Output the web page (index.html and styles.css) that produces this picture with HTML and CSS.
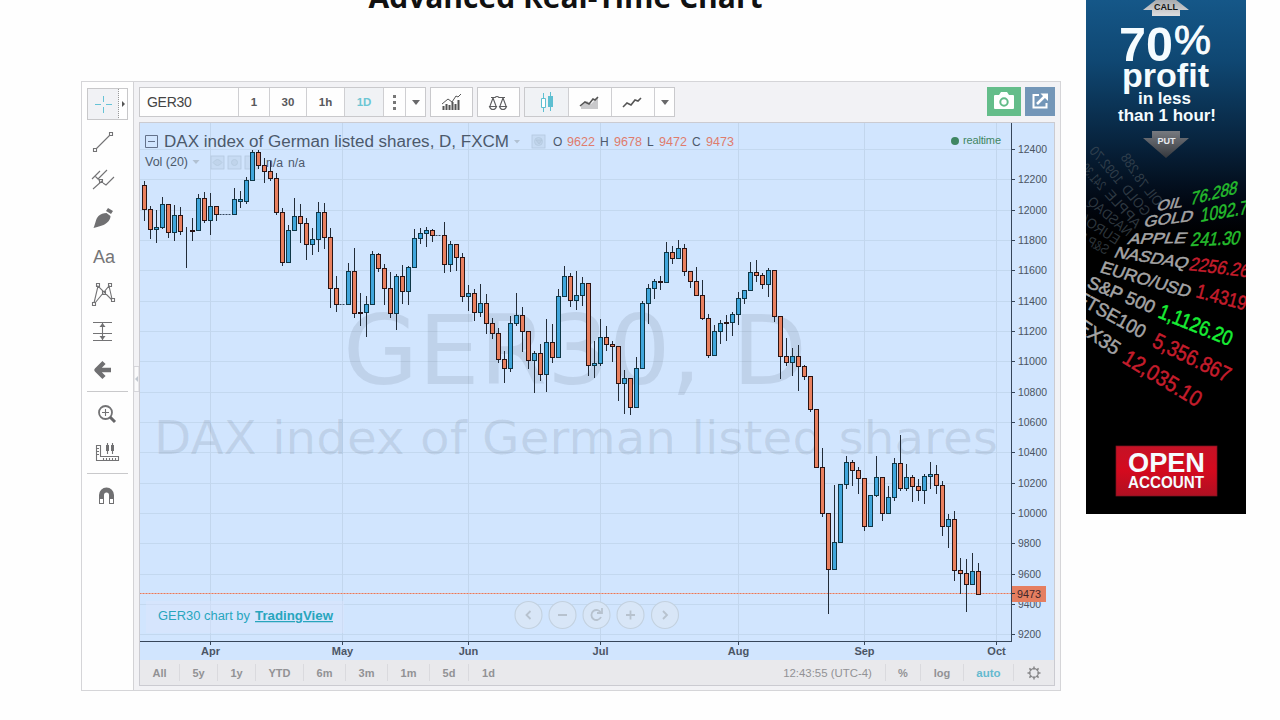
FILE: index.html
```html
<!DOCTYPE html>
<html lang="en">
<head>
<meta charset="utf-8">
<title>Advanced Real-Time Chart</title>
<link rel="stylesheet" href="styles.css">
</head>
<body>
<div class="page">
  <main class="main">
    <h1 class="title">Advanced Real-Time Chart</h1>
    <section class="widget">
      <nav class="tools">
        <svg class="tool" viewBox="0 0 46 38"><rect x="3.5" y="3.500" width="40" height="31" fill="#f1f2f5" stroke="#c8c8ca"/><path d="M35 4h8v30h-8z" fill="#fff"/><path d="M34.500 4v30" stroke="#999" stroke-dasharray="1 1"/><path d="M38 16l3 3-3 3z" fill="#555"/><path d="M11 19.500h6M22 19.500h6M19.500 11v6M19.500 22v6" stroke="#66c3d6"/></svg>
        <svg class="tool" viewBox="0 0 46 38"><path class="ln" d="M12 26L26 12M9.500 25.500h3v3h-3zM25.500 9.500h3v3h-3z"/></svg>
        <svg class="tool" viewBox="0 0 46 38"><path class="ln" d="M9 28l9-8M19 22l3 2 8-8M16 20l-5-5M8 18l8-8M14 18l9-9M18 21l-1-1M15.500 18.500h3v3h-3z"/></svg>
        <svg class="tool" viewBox="0 0 46 38"><path class="fl" d="M9.500 29c2-4 2-9 5-12 2-2 5-3 8-3l4 3c0 4-3 7-7 9-3 1-6 2-10 3zM22 12l2-3 5 3-2 3z"/></svg>
        <svg class="tool" viewBox="0 0 46 38"><text class="letters" x="9" y="26">Aa</text></svg>
        <svg class="tool" viewBox="0 0 46 38"><path class="ln" d="M10 28l4-17 14 14M11 28l14-17 3 13M8.500 27.500h3v3h-3zM12.500 8.500h3v3h-3zM24.500 8.500h3v3h-3zM27.500 23.500h3v3h-3zM18.500 16.500h3v3h-3z"/></svg>
        <svg class="tool" viewBox="0 0 46 38"><path class="ln" d="M9 9.500h19M9 20.500h19M9 27.500h19M18.500 10v17"/><path class="fl" d="M18.500 10l3 4h-6zM18.500 27l3-4h-6z"/></svg>
        <svg class="tool" viewBox="0 0 46 38"><path d="M27 19H13M20 11.500l-7.500 7.500 7.500 7.500" fill="none" stroke="#707072" stroke-width="4.500" stroke-linejoin="round"/></svg>
        <hr class="rule">
        <svg class="tool" viewBox="0 0 46 38"><circle cx="21.500" cy="17.500" r="6.500" fill="none" stroke="#737375" stroke-width="1.800"/><path class="ln" d="M18 17.500h7M21.500 14v7"/><path d="M26 22l5 5" stroke="#666668" stroke-width="3"/></svg>
        <svg class="tool" viewBox="0 0 46 38"><path class="ln" d="M12.500 12.500h4v11h18v4h-22zM13 15.500h2M13 18.500h2M13 21.500h2M19.500 25v2M22.500 25v2M25.500 25v2M28.500 25v2M31.500 25v2M23.500 10v11M28.500 10v11"/><path class="fl" d="M22 12h3v6h-3zM27 12h3v6h-3z"/></svg>
        <hr class="rule">
        <svg class="tool" viewBox="0 0 46 38"><path class="fl" d="M15 27V18a7.500 7.500 0 0 1 15 0v9h-5v-9a2.500 2.500 0 0 0-5 0v9z"/><path d="M16 22h3v4h-3zM26 22h3v4h-3z" fill="#fff"/></svg>
      </nav>
      <div class="body">
        <div class="bar">
          <div class="group intervals">
            <span class="symbol">GER30</span><span>1</span><span>30</span><span>1h</span><span class="on">1D</span>
            <span><svg width="21" height="28"><path d="M9 7h3v3H9zM9 13h3v3H9zM9 19h3v3H9z" fill="#777"/></svg></span>
            <span class="drop"><i class="caret"></i></span>
          </div>
          <div class="group single"><svg width="41" height="28"><path d="M12.500 22v-4M15.500 22v-6M18.500 22v-5M21.500 22v-8M24.500 22v-6M27.500 22V12" stroke="#555" stroke-width="2"/><path d="M11 16l6-5 4 3 4-6 2 1 3-3" fill="none" stroke="#555"/></svg></div>
          <div class="group single scales"><svg width="41" height="28"><path d="M13 9.500h4q2-2 4 0h6M15 10l-3 8M15 10l3 8M25 10l-3 8M25 10l3 8M11.500 18.500h7q-1 3-3.500 3t-3.500-3zM21.500 18.500h7q-1 3-3.500 3t-3.500-3z" fill="none" stroke="#5d5d5f" stroke-width="1.100"/></svg></div>
          <div class="group styles">
            <span class="on"><svg width="42" height="28"><path d="M17.500 5v19M24.500 4v19" stroke="#5ebfd1"/><path d="M15.500 10.500h4v9h-4z" fill="#fff" stroke="#5ebfd1"/><path d="M22 8h5v11h-5z" fill="#5ebfd1"/></svg></span>
            <span><svg width="42" height="28"><path d="M12 18l6-5 4 3 7-7v12H12z" fill="#c9c9cb"/><path d="M11 18l5-4 4 2 4-5 2 1 3-3" fill="none" stroke="#555" stroke-width="1.600"/></svg></span>
            <span><svg width="42" height="28"><path d="M11 19l4-4 4 2 4-5 3 1 3-3" fill="none" stroke="#555" stroke-width="1.600"/></svg></span>
            <span class="drop"><i class="caret"></i></span>
          </div>
          <div class="camera"><svg width="34" height="29"><path d="M7 9q0-1 1-1h4l2-3h6l2 3h4q1 0 1 1v12q0 1-1 1H8q-1 0-1-1z" fill="#fff"/><circle cx="17" cy="15" r="3.700" fill="none" stroke="#62bb88" stroke-width="2"/></svg></div>
          <div class="share"><svg width="30" height="29"><path d="M14 8H8.500v12.500h13V16" fill="none" stroke="#fff" stroke-width="2"/><path d="M12 17l8-8" stroke="#fff" stroke-width="2.500"/><path d="M15.500 6.500H23V14z" fill="#fff"/></svg></div>
        </div>
        <div class="frame">
          <svg class="chart" viewBox="140 123 914 537">
            <g id="grid"></g>
            <text class="mark" x="343" y="384" font-size="96" textLength="464" lengthAdjust="spacingAndGlyphs">GER30, D</text>
            <text class="mark thick" x="154" y="454" textLength="844" lengthAdjust="spacingAndGlyphs">DAX index of German listed shares</text>
            <path d="M140 593.500h871" stroke="#eba999"/>
            <path d="M140 593.500h871" stroke="#e0785f" stroke-dasharray="1 2"/>
            <g class="ghost"><rect x="211" y="156" width="13" height="13"/><rect x="228" y="156" width="13" height="13"/><rect x="245" y="156" width="13" height="13"/><rect x="532" y="135" width="13" height="13"/>
              <path d="M213 162.500q4.500-6 9 0q-4.500 6-9 0zM536 140l3 4 3-4z"/><circle cx="234.500" cy="162.500" r="3"/><circle cx="538.500" cy="141.500" r="4"/></g>
            <g id="candles"></g>
            <g class="legend">
              <path d="M145.500 135.500h12v12h-12zM148 141.500h7" fill="none" stroke="#63718a"/>
              <text x="164" y="147" font-size="16" textLength="345" lengthAdjust="spacingAndGlyphs">DAX index of German listed shares, D, FXCM</text>
              <path d="M514 140h6l-3 3.500zM192.500 160h7l-3.500 4z" fill="#b1c1d2"/>
              <text x="145" y="166" font-size="12" textLength="43" lengthAdjust="spacingAndGlyphs">Vol (20)</text>
              <text x="266" y="167" font-size="12" textLength="17" lengthAdjust="spacingAndGlyphs">n/a</text>
              <text x="288" y="167" font-size="12" textLength="17" lengthAdjust="spacingAndGlyphs">n/a</text>
              <g font-size="12"><text x="553" y="146">O</text><text class="val" x="567" y="146" textLength="28" lengthAdjust="spacingAndGlyphs">9622</text><text x="600" y="146">H</text><text class="val" x="614" y="146" textLength="28" lengthAdjust="spacingAndGlyphs">9678</text><text x="647" y="146">L</text><text class="val" x="659" y="146" textLength="28" lengthAdjust="spacingAndGlyphs">9472</text><text x="692" y="146">C</text><text class="val" x="706" y="146" textLength="28" lengthAdjust="spacingAndGlyphs">9473</text></g>
              <circle cx="955" cy="141" r="4" fill="#3f8662"/><text x="963" y="144" font-size="11" textLength="38" class="live">realtime</text>
            </g>
            <rect x="146" y="601" width="198" height="32" fill="#dce4fc" opacity=".45"/>
            <text class="credit" x="158" y="620" textLength="92" lengthAdjust="spacingAndGlyphs">GER30 chart by</text>
            <text class="credit brand" x="255" y="620" textLength="78" lengthAdjust="spacingAndGlyphs">TradingView</text>
            <g class="nav"><circle cx="528.500" cy="615" r="13.500"/><circle cx="562.500" cy="615" r="13.500"/><circle cx="596.500" cy="615" r="13.500"/><circle cx="630.500" cy="615" r="13.500"/><circle cx="665" cy="615" r="13.500"/>
              <path d="M530.500 611l-4 4 4 4M558 615h9M601 613a5 5 0 1 0 0 4M602 608v5h-5M626 615h9M630.500 610.500v9M663 611l4 4-4 4"/></g>
            <path d="M1011.500 123v519M140 641.500h872" stroke="#36465a"/>
            <g id="axis"></g>
            <rect x="1012" y="586" width="34" height="16" fill="#e57e60"/><path d="M1012 593.500h3" stroke="#333"/>
            <text x="1017" y="598" font-size="11" textLength="24" lengthAdjust="spacingAndGlyphs" fill="#41262a">9473</text>
          </svg>
          <div class="foot">
            <div class="ranges"><span>All</span><span>5y</span><span>1y</span><span>YTD</span><span>6m</span><span>3m</span><span>1m</span><span>5d</span><span>1d</span></div>
            <div class="opts"><span class="clock">12:43:55 (UTC-4)</span><span>%</span><span>log</span><span class="auto">auto</span><span><svg width="16" height="16"><circle cx="8" cy="8" r="4.300" fill="none" stroke="#858587" stroke-width="1.200"/><path d="M8 1.500v3M8 11.500v3M1.500 8h3M11.500 8h3M3.400 3.400l2 2M10.600 10.600l2 2M3.400 12.600l2-2M10.600 5.400l2-2" stroke="#858587" stroke-width="1.500"/></svg></span></div>
          </div>
        </div>
        <svg class="handle" width="5" height="26"><path d="M0 .5h5v25H0z" fill="#fafafb" stroke="#d5d5da"/><path d="M4 10l-3 3 3 3z" fill="#c2c8d0"/></svg>
      </div>
    </section>
  </main>
  <aside class="ad">
    <svg width="160" height="514" viewBox="1086 0 160 514">
      <defs>
        <linearGradient id="sky" x1="0" y1="0" x2="0" y2="1"><stop offset="0" stop-color="#155788"/><stop offset=".12" stop-color="#0f4772"/><stop offset=".27" stop-color="#082540"/><stop offset=".4" stop-color="#010610"/><stop offset=".46" stop-color="#000"/></linearGradient>
        <linearGradient id="steel" x1="0" y1="0" x2="0" y2="1"><stop offset="0" stop-color="#777a80"/><stop offset="1" stop-color="#35383d"/></linearGradient>
        <linearGradient id="silver" x1="0" y1="0" x2="0" y2="1"><stop offset="0" stop-color="#8e9195"/><stop offset="1" stop-color="#dededf"/></linearGradient>
        <linearGradient id="red" x1="0" y1="0" x2="0" y2="1"><stop offset="0" stop-color="#c51226"/><stop offset=".5" stop-color="#d40a1e"/><stop offset="1" stop-color="#ae1022"/></linearGradient>
      </defs>
      <path d="M1086 0h160v514h-160z" fill="url(#sky)"/>
      <path d="M1143 10l23-18 23 18h-9v6h-28v-6z" fill="url(#silver)"/>
      <text x="1166" y="9.500" class="tag" fill="#151515">CALL</text>
      <g class="pitch">
        <text x="1119" y="61" font-size="49" textLength="54" lengthAdjust="spacingAndGlyphs">70</text>
        <text x="1174" y="54" font-size="40" font-weight="400" stroke="#fff" textLength="37" lengthAdjust="spacingAndGlyphs" class="pct">%</text>
        <text x="1122" y="87" font-size="34" textLength="87" lengthAdjust="spacingAndGlyphs">profit</text>
        <text x="1138" y="104" font-size="17" textLength="53" lengthAdjust="spacingAndGlyphs">in less</text>
        <text x="1118" y="121" font-size="17" textLength="98" lengthAdjust="spacingAndGlyphs">than 1 hour!</text>
      </g>
      <path d="M1152 131h28v7h9l-23 20-23-20h9z" fill="url(#steel)"/>
      <text x="1166.500" y="144" class="tag" fill="#e6e9ed">PUT</text>
      <g class="echo" font-size="14">
        <text transform="translate(1156 207) rotate(232) scale(1 -1)" textLength="20" lengthAdjust="spacingAndGlyphs">OIL</text>
        <text transform="translate(1141 189) rotate(237) scale(1 -1)" textLength="38" lengthAdjust="spacingAndGlyphs">78.288</text>
        <text transform="translate(1144 217) rotate(230) scale(1 -1)" textLength="36" lengthAdjust="spacingAndGlyphs">GOLD</text>
        <text transform="translate(1117 185) rotate(230) scale(1 -1)" textLength="44" lengthAdjust="spacingAndGlyphs">1092.70</text>
        <text transform="translate(1135 229) rotate(228) scale(1 -1)" textLength="46" lengthAdjust="spacingAndGlyphs">APPLE</text>
        <text transform="translate(1100 191) rotate(228) scale(1 -1)" textLength="30" lengthAdjust="spacingAndGlyphs">241.30</text>
        <text transform="translate(1127 237) rotate(220) scale(1 -1)" textLength="53" lengthAdjust="spacingAndGlyphs">NASDAQ</text>
        <text transform="translate(1116 245) rotate(213) scale(1 -1)" textLength="50" lengthAdjust="spacingAndGlyphs">EURO/U</text>
        <text transform="translate(1106 255) rotate(208) scale(1 -1)" textLength="38" lengthAdjust="spacingAndGlyphs">S&amp;P 50</text>
      </g>
      <g class="ticker">
        <text transform="translate(1156 211) rotate(-9) skewX(-28)" font-size="14" textLength="26" lengthAdjust="spacingAndGlyphs">OIL</text>
        <text transform="translate(1143 227) rotate(-7) skewX(-25)" font-size="15" textLength="49" lengthAdjust="spacingAndGlyphs">GOLD</text>
        <text transform="translate(1127 244) rotate(-1) skewX(-22)" font-size="15" textLength="58" lengthAdjust="spacingAndGlyphs">APPLE</text>
        <text transform="translate(1113 257) rotate(9) skewX(-18)" font-size="16" textLength="74" lengthAdjust="spacingAndGlyphs">NASDAQ</text>
        <text transform="translate(1099 272) rotate(16) skewX(-8)" font-size="17" textLength="93" lengthAdjust="spacingAndGlyphs">EURO/USD</text>
        <text transform="translate(1086 287) rotate(22) skewX(-3)" font-size="18" textLength="71" lengthAdjust="spacingAndGlyphs">S&amp;P 500</text>
        <text transform="translate(1075 302) rotate(29)" font-size="19" textLength="76" lengthAdjust="spacingAndGlyphs">FTSE100</text>
        <text transform="translate(1060 319) rotate(34)" font-size="20" textLength="66" lengthAdjust="spacingAndGlyphs">IBEX35</text>
        <g class="up">
          <text transform="translate(1190 205) rotate(-14) skewX(-25)" font-size="17" textLength="48" lengthAdjust="spacingAndGlyphs">76.288</text>
          <text transform="translate(1200 222) rotate(-10) skewX(-18)" font-size="19" textLength="57" lengthAdjust="spacingAndGlyphs">1092.70</text>
          <text transform="translate(1190 246) rotate(-2) skewX(-16)" font-size="19" textLength="49" lengthAdjust="spacingAndGlyphs">241.30</text>
          <text transform="translate(1157 317) rotate(22)" font-size="21" textLength="78" lengthAdjust="spacingAndGlyphs" class="lit">1,1126.20</text>
        </g>
        <g class="down">
          <text transform="translate(1188 270) rotate(7) skewX(-12)" font-size="19" textLength="60" lengthAdjust="spacingAndGlyphs">2256.26</text>
          <text transform="translate(1195 297) rotate(15)" font-size="20" textLength="61" lengthAdjust="spacingAndGlyphs">1.43195</text>
          <text transform="translate(1151 346) rotate(26)" font-size="22" textLength="84" lengthAdjust="spacingAndGlyphs">5,356.867</text>
          <text transform="translate(1121 362) rotate(31)" font-size="22" textLength="88" lengthAdjust="spacingAndGlyphs">12,035.10</text>
        </g>
      </g>
      <rect x="1116" y="446" width="101" height="50" fill="url(#red)" stroke="#7c1420" stroke-width=".7"/>
      <g class="pitch"><text x="1128" y="472" font-size="27" textLength="77" lengthAdjust="spacingAndGlyphs">OPEN</text><text x="1128" y="488" font-size="16" textLength="76" lengthAdjust="spacingAndGlyphs">ACCOUNT</text></g>
    </svg>
  </aside>
</div>
<script src="chart.js"></script>
</body>
</html>
```

FILE: styles.css
```css
* { box-sizing: border-box; }
body { margin: 0; background: #fefefe; font-family: "Liberation Sans", Arial, sans-serif; overflow: hidden; }
.page { display: flex; height: 720px; overflow: hidden; }
.main { width: 980px; margin-left: 81px; flex: none; }
.title { margin: -23px 0 22px; padding-right: 11px; height: 82px; font: 700 30px/40px "Open Sans", sans-serif; text-align: center; color: #111; white-space: nowrap; }
.widget { display: flex; height: 610px; border: 1px solid #d5d5d8; background: #f2f2f5; }
.tools { width: 52px; padding: 3px 2px 2px; background: #fefefe; border-right: 1px solid #d2d2d5; display: flex; flex-direction: column; flex: none; }
.tool { width: 46px; height: 38px; display: block; flex: none; }
.rule { width: 41px; height: 1px; border: 0; background: #c9c9cb; margin: 2px 0 3px 3px; flex: none; }
.ln { fill: none; stroke: #737375; stroke-width: 1.1; }
.fl { fill: #707072; }
.letters { font-size: 18px; fill: #757577; }
.body { flex: 1; padding: 5px 5px 0 5px; position: relative; }
.handle { position: absolute; left: 0; top: 284px; }
.bar { display: flex; height: 35px; align-items: flex-start; }
.group { display: flex; height: 30px; margin-right: 4px; border: 1px solid #c9c9cc; background: #fefefe; font-size: 11.5px; font-weight: 700; color: #58585b; }
.group span { display: flex; align-items: center; justify-content: center; border-left: 1px solid #cfcfd2; flex: none; }
.group span:first-child { border-left: 0; }
.group svg { display: block; }
.intervals { width: 287px; }
.intervals span { width: 37px; }
.intervals .symbol { width: 98px; justify-content: flex-start; padding-left: 7px; font-size: 14px; letter-spacing: -.3px; font-weight: 400; color: #444; }
.intervals span:nth-child(2) { width: 31px; }
.intervals span:nth-child(4) { width: 38px; }
.intervals span:nth-child(5) { width: 39px; }
.intervals span:nth-child(6) { width: 22px; }
.intervals .drop, .styles .drop { width: 20px; }
.group .on { background: #f0f2f5; color: #6cc6d4; }
.caret { border: 4.5px solid transparent; border-top: 5px solid #68686a; border-bottom: 0; }
.single { width: 43px; }
.scales { margin-left: 0; }
.styles { width: 151px; }
.styles span { width: 43px; }
.camera { width: 34px; height: 29px; background: #64bd8a; margin-left: auto; }
.share { width: 30px; height: 29px; background: #7396b8; margin-left: 4px; }
.frame { border: 1px solid #cbcbd1; height: 564px; width: 916px; }
.chart { display: block; width: 914px; height: 537px; background: #d1e5fe; font-family: "Liberation Sans", sans-serif; }
.mark { font-family: "DejaVu Sans", sans-serif; fill: #3e4c5a; fill-opacity: .12; }
.thick { font-size: 47px; }
.legend { fill: #4c596b; }
.legend .val { fill: #df7c6d; }
.legend .live { fill: #3f8662; }
.ghost { fill: #abc0d4; fill-opacity: .25; stroke: #b4c9de; stroke-width: .8; }
.credit { font-size: 12.5px; fill: #28a5bd; }
.brand { font-weight: 700; text-decoration: underline; }
.nav { fill: #d8e6f7; stroke: #c3d1df; stroke-width: 1.1; }
.nav path { fill: none; stroke: #b7c2ce; stroke-width: 1.8; }
.axis-label { font-size: 11px; fill: #4a5462; }
.month { font-size: 11px; font-weight: 700; fill: #4b5565; text-anchor: middle; }
.foot { height: 25px; display: flex; justify-content: space-between; background: #e9e9ec; font-size: 11px; font-weight: 700; color: #929295; }
.foot span { display: flex; align-items: center; justify-content: center; height: 17px; margin-top: 4px; border-left: 1px solid #dadade; }
.foot span:first-child { border-left: 0; }
.ranges, .opts { display: flex; }
.ranges span { width: 42px; }
.ranges span:first-child { width: 39px; }
.ranges span:nth-child(2), .ranges span:nth-child(3) { width: 38px; }
.ranges span:nth-child(4) { width: 48px; }
.ranges span:nth-child(8) { width: 39px; }
.ranges span:nth-child(9) { width: 40px; }
.opts span { width: 35px; }
.opts .clock { width: 115px; font-weight: 400; font-size: 11.4px; }
.opts span:nth-child(3) { width: 43px; }
.opts .auto { width: 50px; color: #64bad0; font-size: 11.5px; }
.opts span:last-child { width: 41px; }
.ad { margin-left: 25px; width: 160px; height: 514px; flex: none; font-family: "Liberation Sans", sans-serif; }
.ad svg { display: block; }
.tag { font-size: 9px; font-weight: 700; text-anchor: middle; }
.pitch { fill: #f5fcff; font-weight: 700; }
.pct { stroke-width: .8; }
.echo { fill: #46525b; opacity: .65; }
.ticker { fill: #a4a4a5; stroke: #a4a4a5; stroke-width: .5; }
.up { fill: #25bd2d; stroke: #25bd2d; }
.lit { fill: #18ee35; stroke: #18ee35; }
.down { fill: #c51d2c; stroke: #c51d2c; }
```

FILE: chart.js
```javascript
// Candle rows are [open/close top, bottom, high, low, rising] in thirds of a
// pixel below the y value of their segment. A one-value row is a closed day.
const segments = [
  { first: 0, y: 140, rows: [[136,208,124,240,0],[208,268,200,295,0],[262,268,210,307,1],[193,262,172,265,1],[193,277,193,292,0],[226,277,195,302,1],[226,274,202,284,0],[274,274,262,382,0],[271,274,235,302,0],[175,271,163,271,1],[175,241,157,248,0],[199,241,159,284,1],[199,223,199,241,0],[223],[223],[178,223,145,223,1],[178,184,154,202,1],[121,184,112,190,1],[37,121,30,121,1],[37,76,31,85,0],[76,94,55,128,0],[94,115,65,121,0],[115,217,100,222,0],[217,367,205,376,0],[271,367,255,367,1],[229,271,175,271,1],[229,250,192,308,0],[250,313,235,358,0],[298,313,265,344,1],[217,298,187,334,1],[217,292,190,325,0],[292,445,265,502,0],[445,493,408,514,0],[493]] },
  { first: 34, y: 190, rows: [[244,343,220,343,1],[244,370,175,382,0],[367,370,310,406,0],[343,367,319,440,1],[193,343,184,343,1],[193,235,190,243,0],[235,295,223,343,0],[295,370,246,382,0],[259,370,252,419,1],[259,304,226,340,0],[232,304,228,343,1],[145,232,117,232,1],[130,145,115,160,1],[121,130,111,170,1],[121,136,118,155,0],[136],[136,223,96,248,0],[163,223,154,244,1],[163,202,163,242,0],[202,319,190,335,0],[310,319,285,360,1],[310,367,298,392,0],[340,367,283,380,1],[340,400,314,431,0],[400,430,384,445,0],[430,508,415,517,0],[508,535,485,578,0],[400,535,380,544,1],[376,400,310,406,1],[376,424,352,485,0],[424,511,424,535,0],[490,511,484,608,1],[490,553,463,572,0],[457,553,388,605,1]] },
  { first: 68, y: 220, rows: [[367,412,312,428,0],[229,412,208,412,1],[169,229,138,229,1],[169,241,160,260,0],[226,241,153,268,1],[190,226,172,257,1],[190,436,190,467,0],[430,436,363,473,1],[352,430,298,437,1],[352,373,320,392,0],[373,379,365,424,0],[379,490,379,542,0],[475,490,450,580,1],[475,562,475,584,0],[445,562,411,562,1],[250,445,244,445,1],[205,250,192,311,1],[184,205,178,236,1],[184,187,169,209,0],[97,187,66,187,1],[97,115,78,131,0],[85,115,60,115,1],[85,154,73,166,0],[154,184,154,203,0],[184,226,142,226,0],[226,295,180,299,0],[295,406,283,413,0],[334,406,316,406,1],[310,334,300,371,1],[307,310,285,362,0],[283,307,277,346,1]] },
  { first: 99, y: 250, rows: [[145,193,126,224,1],[121,145,121,160,1],[67,121,37,121,1],[67,76,30,93,0],[76,103,70,116,0],[61,103,55,140,1],[61,199,61,215,0],[199,319,199,386,0],[319,337,266,347,0],[319,337,294,377,1],[319,349,286,422,0],[349,379,345,389,0],[379,478,379,485,0],[478,652,478,652,0],[652,790,595,799,0],[790,958,790,1091,0],[877,958,706,958,1],[703,877,703,877,1],[637,703,618,716,1],[637,661,631,707,0],[661,685,652,731,0],[685,829,685,841,0]] },
  { first: 121, y: 420, rows: [[226,320,226,320,1],[172,226,108,230,1],[172,280,172,302,0],[232,280,199,280,1],[130,232,114,240,1],[130,205,45,210,0],[172,205,133,212,1],[172,199,167,245,0],[199,211,178,242,0],[169,211,162,250,1],[163,169,126,205,1],[163,196,135,221,0],[196,320,184,347,0],[298,320,283,381,1],[298,451,273,482,0],[451,460,415,520,0],[460,493,418,573,0],[454,493,399,493,1],[454,523,430,523,0]] }
];

const px = v => Math.floor(v / 3) + 0.5;
let candles = "";
for (const { first, y, rows } of segments) {
  rows.forEach((row, i) => {
    const x = 144.5 + 6 * (first + i);
    const [top, bottom, high, low, rising] = row;
    if (row.length === 1) {
      candles += `<path d="M${x - 3} ${y + px(top)}h6" stroke="#34475e" stroke-dasharray="2 1"/>`;
      return;
    }
    candles += `<path d="M${x} ${y + px(high) - 0.5}V${y + px(low) + 0.5}" stroke="#222c38"/>`;
    candles += `<rect x="${x - 2}" y="${y + px(top)}" width="4" height="${px(bottom) - px(top)}" fill="${rising ? "#40a6dc" : "#e9805f"}" stroke="${rising ? "#0f3746" : "#2a1414"}"/>`;
  });
}
document.getElementById("candles").innerHTML = candles;

let grid = "", axis = "";
for (let i = 0; i <= 16; i++) {
  const y = Math.round(149 + i * 30.33);
  grid += `<path d="M140 ${y + 0.5}h871" stroke="#c3d8ef"/>`;
  axis += `<path d="M1012 ${y + 0.5}h3" stroke="#36465a"/>`;
  const price = 12400 - i * 200;
  axis += `<text class="axis-label" x="1018" y="${y + 4}" textLength="${price > 9999 ? 29 : 23}" lengthAdjust="spacingAndGlyphs">${price}</text>`;
}
const months = { Apr: 210, May: 342, Jun: 468, Jul: 600, Aug: 738, Sep: 864, Oct: 996 };
for (const [name, x] of Object.entries(months)) {
  grid += `<path d="M${x + 0.5} 123v518" stroke="#c2d6ed"/>`;
  axis += `<path d="M${x + 0.5} 642v3" stroke="#36465a"/><text class="month" x="${x + 0.5}" y="655">${name}</text>`;
}
document.getElementById("grid").innerHTML = grid;
document.getElementById("axis").innerHTML = axis;
```
